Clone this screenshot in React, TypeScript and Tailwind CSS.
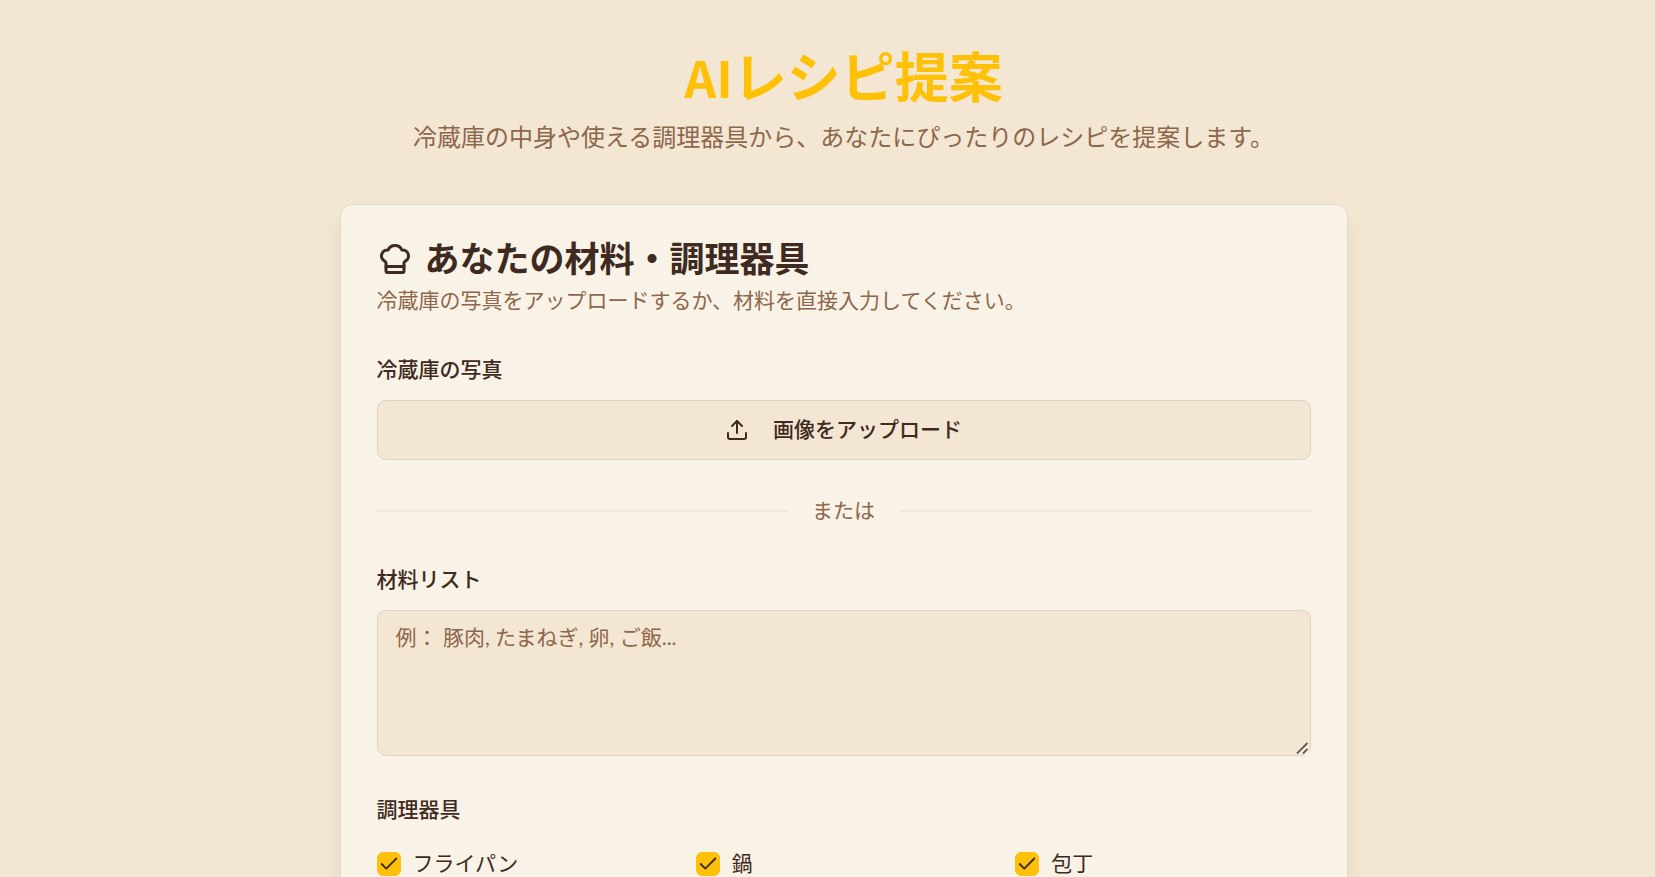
import React, { useState } from "react";
import { Check, ChefHat, Upload } from "lucide-react";

const tools = ["フライパン", "鍋", "包丁"];

const App: React.FC = () => {
  const [ingredients, setIngredients] = useState("");
  const [selectedTools, setSelectedTools] = useState<string[]>(tools);

  const toggleTool = (tool: string) => {
    setSelectedTools((prev) =>
      prev.includes(tool) ? prev.filter((t) => t !== tool) : [...prev, tool]
    );
  };

  return (
    <div
      lang="ja"
      className="relative h-screen overflow-hidden bg-[#f3e6d3] pl-8 font-['Inter','Noto_Sans_CJK_JP',sans-serif] text-2xl leading-9 text-[#3e2a20]"
    >
      {/* Soft circle at the left edge */}
      <div className="absolute -left-24 top-[790px] size-27 rounded-full bg-[#f2e5d1]" />

      <main className="mx-auto max-w-[1008px] py-12">
        <header className="mb-12 text-center">
          <h1 className="font-['Lato','Noto_Sans_CJK_JP',sans-serif] text-[54px] font-bold leading-[60px] text-[#ffc107]">
            <span className="font-['Noto_Sans_CJK_JP',sans-serif] text-[50px] leading-none">AI</span>レシピ提案
          </h1>
          <p className="mt-3 text-[#8d674b]">
            冷蔵庫の中身や使える調理器具から、あなたにぴったりのレシピを提案します。
          </p>
        </header>

        {/* Input card */}
        <section className="rounded-xl border border-[#e4dac8] bg-[#f9f2e6] shadow-[0_15px_22px_-4px_rgba(0,0,0,0.1),0_6px_9px_-6px_rgba(0,0,0,0.1)]">
          <div className="p-9">
            <h2 className="flex items-center gap-3 text-[35px] font-bold leading-9">
              <ChefHat className="size-9" />
              あなたの材料・調理器具
            </h2>
            <p className="mt-[9px] text-[21px] leading-[30px] text-[#8d674b]">
              冷蔵庫の写真をアップロードするか、材料を直接入力してください。
            </p>
          </div>

          <form className="flex flex-col gap-9 px-9 pb-9" onSubmit={(e) => e.preventDefault()}>
            <div>
              <h3 id="photo-label" className="mb-3 text-[21px] font-medium">冷蔵庫の写真</h3>
              <button
                type="button"
                aria-describedby="photo-label"
                className="flex h-15 w-full items-center justify-center gap-6 rounded-[9px] border border-[#ddd3c0] bg-[#f3e6d3] text-[21px] font-medium"
              >
                <Upload className="size-6" />
                画像をアップロード
              </button>
            </div>

            {/* Divider */}
            <div className="flex items-center gap-6 text-[21px] leading-[30px] text-[#8d674b]">
              <div className="h-0.5 flex-1 bg-[#efe7da]" />
              <span>または</span>
              <div className="h-0.5 flex-1 bg-[#efe7da]" />
            </div>

            <div>
              <label htmlFor="ingredients" className="mb-3 block text-[21px] font-medium">材料リスト</label>
              <div className="relative">
                <textarea
                  id="ingredients"
                  value={ingredients}
                  onChange={(e) => setIngredients(e.target.value)}
                  placeholder="例： 豚肉, たまねぎ, 卵, ご飯..."
                  className="block h-[146px] w-full rounded-[9px] border border-[#ddd3c0] bg-[#f3e6d3] px-[18px] py-[11px] font-['Lato','Noto_Sans_CJK_JP',sans-serif] text-[21px] leading-[30px] placeholder:text-[#8d674b]"
                />
                {/* Larger resize grip over the native one */}
                <svg
                  viewBox="0 0 16 16"
                  aria-hidden="true"
                  className="pointer-events-none absolute bottom-px right-px size-4"
                >
                  <path d="M0 0H16V8Q16 16 8 16H0Z" fill="#f3e6d3" />
                  <path d="M4.5 15.5L15 5M10.5 15.5L15 11" stroke="#fbf3e6" strokeWidth="2" />
                  <path d="M3 14.5L13.5 4M9 14.5L13.5 10" stroke="#625a50" strokeWidth="1.8" />
                </svg>
              </div>
            </div>

            <fieldset>
              <legend className="mb-6 text-[21px] font-medium">調理器具</legend>
              <div className="grid grid-cols-3 gap-6">
                {tools.map((tool) => (
                  <label key={tool} className="flex items-center gap-3 text-[21px] leading-6">
                    <span className="grid size-6 place-items-center">
                      <input
                        type="checkbox"
                        checked={selectedTools.includes(tool)}
                        onChange={() => toggleTool(tool)}
                        className="peer col-start-1 row-start-1 size-6 appearance-none rounded-md border border-[#ffc107] checked:bg-[#ffc107]"
                      />
                      <Check
                        strokeWidth={2}
                        className="pointer-events-none invisible col-start-1 row-start-1 size-[22px] peer-checked:visible"
                      />
                    </span>
                    {tool}
                  </label>
                ))}
              </div>
            </fieldset>
          </form>
        </section>
      </main>
    </div>
  );
};

export default App;
